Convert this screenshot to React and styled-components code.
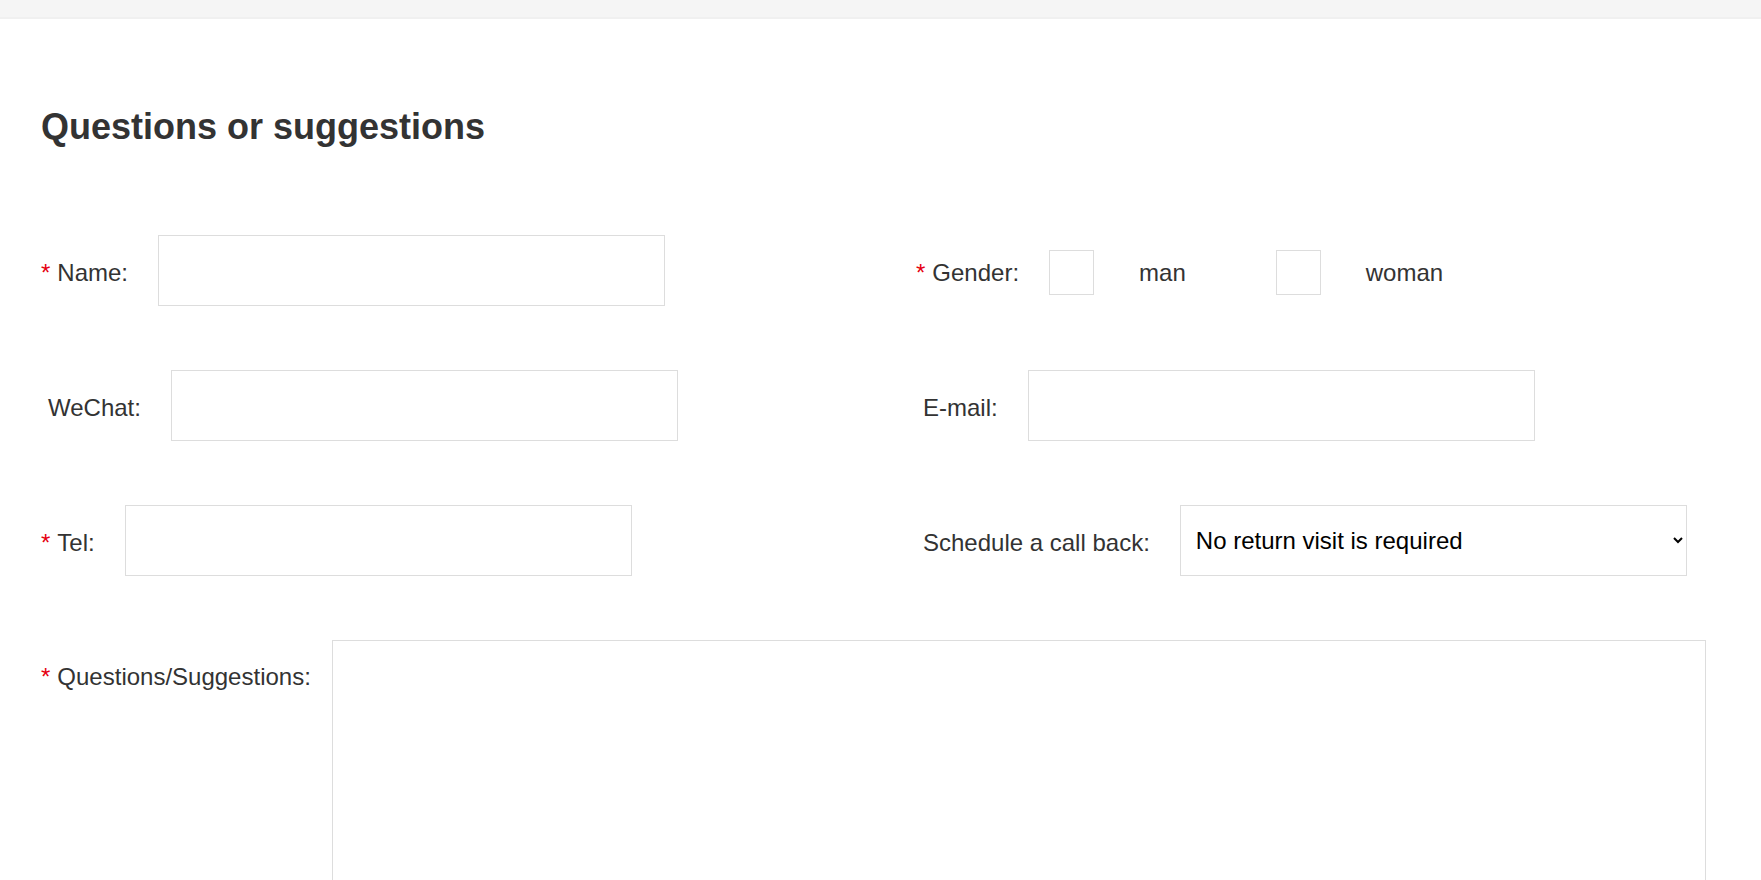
import React from 'react';
import styled, { createGlobalStyle } from 'styled-components';

const GlobalStyle = createGlobalStyle`
  html, body {
    margin: 0;
    padding: 0;
    background: #fff;
    font-family: "Liberation Sans", Arial, sans-serif;
    color: #333;
  }
  * {
    box-sizing: border-box;
  }
`;

const TopBar = styled.div`
  height: 19px;
  background: #f5f5f5;
  border-bottom: 2px solid #f0f0f0;
`;

const Page = styled.div`
  padding: 88px 41px 0 41px;
`;

const Title = styled.h2`
  margin: 0;
  font-size: 36px;
  font-weight: 700;
  line-height: 40px;
  color: #333;
`;

const FormGrid = styled.form`
  display: grid;
  grid-template-columns: 875px 1fr;
  row-gap: 64px;
  margin-top: 88px;
`;

const Field = styled.div`
  display: flex;
  align-items: ${({ top }) => (top ? 'flex-start' : 'center')};
  gap: ${({ gap }) => gap || 30}px;
  grid-column: ${({ wide }) => (wide ? '1 / span 2' : 'auto')};
`;

const Label = styled.label`
  font-size: 24px;
  line-height: 28px;
  color: #333;
  white-space: nowrap;
  padding-left: ${({ required }) => (required ? 0 : 7)}px;
  padding-top: ${({ top }) => (top ? 23 : 5)}px;
`;

const Star = styled.span`
  color: #e60012;
  margin-right: 7px;
`;

const TextInput = styled.input`
  width: 507px;
  height: 71px;
  border: 1px solid #ddd;
  outline: none;
  padding: 0 14px;
  font-size: 24px;
  font-family: inherit;
  background: #fff;
`;

const Select = styled.select`
  width: 507px;
  height: 71px;
  border: 1px solid #ddd;
  outline: none;
  padding: 0 6px 0 11px;
  font-size: 24px;
  font-family: "Liberation Sans", Arial, sans-serif;
  color: #000;
  background: #fff;
  border-radius: 0;
`;

const Choices = styled.div`
  display: flex;
  align-items: center;
  margin-top: 4px;
`;

const Box = styled.input`
  appearance: none;
  width: 45px;
  height: 45px;
  margin: 0;
  border: 1px solid #ddd;
  background: #fff;
`;

const ChoiceText = styled.span`
  font-size: 24px;
  color: #333;
  margin-left: 45px;
  margin-right: ${({ last }) => (last ? 0 : 90)}px;
`;

const TextArea = styled.textarea`
  width: 1374px;
  height: 300px;
  border: 1px solid #ddd;
  outline: none;
  resize: none;
  padding: 12px;
  font-size: 24px;
  font-family: inherit;
`;

const Req = () => <Star>*</Star>;

export default function App() {
  return (
    <>
      <GlobalStyle />
      <TopBar />
      <Page>
        <Title>Questions or suggestions</Title>
        <FormGrid>
          <Field>
            <Label required><Req />Name:</Label>
            <TextInput type="text" />
          </Field>
          <Field>
            <Label required><Req />Gender:</Label>
            <Choices>
              <Box type="checkbox" />
              <ChoiceText>man</ChoiceText>
              <Box type="checkbox" />
              <ChoiceText last>woman</ChoiceText>
            </Choices>
          </Field>

          <Field>
            <Label>WeChat:</Label>
            <TextInput type="text" />
          </Field>
          <Field>
            <Label>E-mail:</Label>
            <TextInput type="email" />
          </Field>

          <Field>
            <Label required><Req />Tel:</Label>
            <TextInput type="tel" />
          </Field>
          <Field>
            <Label>Schedule a call back:</Label>
            <Select defaultValue="none">
              <option value="none">No return visit is required</option>
              <option value="morning">Morning</option>
              <option value="afternoon">Afternoon</option>
            </Select>
          </Field>

          <Field wide top gap={21}>
            <Label required top><Req />Questions/Suggestions:</Label>
            <TextArea />
          </Field>
        </FormGrid>
      </Page>
    </>
  );
}
